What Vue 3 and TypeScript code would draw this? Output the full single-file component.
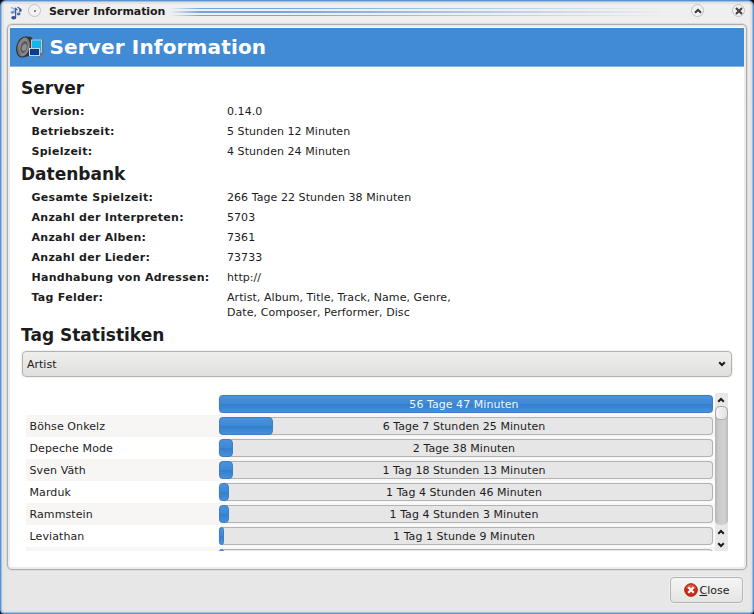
<script setup lang="ts">
interface Field { label: string; value: string }
interface Stat { name: string; time: string; width: number }

const server: Field[] = [
  { label: 'Version:', value: '0.14.0' },
  { label: 'Betriebszeit:', value: '5 Stunden 12 Minuten' },
  { label: 'Spielzeit:', value: '4 Stunden 24 Minuten' },
]
const database: Field[] = [
  { label: 'Gesamte Spielzeit:', value: '266 Tage 22 Stunden 38 Minuten' },
  { label: 'Anzahl der Interpreten:', value: '5703' },
  { label: 'Anzahl der Alben:', value: '7361' },
  { label: 'Anzahl der Lieder:', value: '73733' },
  { label: 'Handhabung von Adressen:', value: 'http://' },
  { label: 'Tag Felder:', value: 'Artist, Album, Title, Track, Name, Genre,\nDate, Composer, Performer, Disc' },
]
const stats: Stat[] = [
  { name: '', time: '56 Tage 47 Minuten', width: 494 },
  { name: 'Böhse Onkelz', time: '6 Tage 7 Stunden 25 Minuten', width: 54 },
  { name: 'Depeche Mode', time: '2 Tage 38 Minuten', width: 14 },
  { name: 'Sven Väth', time: '1 Tag 18 Stunden 13 Minuten', width: 14 },
  { name: 'Marduk', time: '1 Tag 4 Stunden 46 Minuten', width: 10 },
  { name: 'Rammstein', time: '1 Tag 4 Stunden 3 Minuten', width: 10 },
  { name: 'Leviathan', time: '1 Tag 1 Stunde 9 Minuten', width: 5 },
  { name: '', time: '', width: 5 },
]
</script>

<template>
  <div class="window">
    <header class="titlebar">
      <svg class="note" width="12" height="14" viewBox="0 0 12 14">
        <path d="M1 1.500l3.200 1.200v3" fill="none" stroke="#8fa9d6" stroke-width="1.300" />
        <ellipse cx="2.600" cy="6.300" rx="2" ry="1.400" fill="#6f8fc8" />
        <path d="M5.600 11.500V2.500L7.500 4M9.800 6V2M7.500 1l3.500 2.500v2" fill="none" stroke="#3f5f9f" stroke-width="1.300" />
        <ellipse cx="3.700" cy="11.700" rx="2.500" ry="1.800" fill="#34518f" />
        <ellipse cx="8.700" cy="8" rx="1.800" ry="1.400" fill="#4869aa" />
      </svg>
      <span class="round dot"><i></i></span>
      <span class="caption">Server Information</span>
      <span class="stripes"><i></i><i></i><i></i></span>
      <span class="round">
        <svg width="8" height="6" viewBox="0 0 8 6"><path d="M1 4.800L4 1.800L7 4.800" fill="none" stroke="#393734" stroke-width="2" /></svg>
      </span>
      <span class="round close-x">
        <svg width="8" height="8" viewBox="0 0 8 8"><path d="M1 1L7 7M7 1L1 7" fill="none" stroke="#464441" stroke-width="2.200" /></svg>
      </span>
    </header>

    <main class="panel">
      <div class="banner">
        <svg class="speaker" width="28" height="24" viewBox="0 0 28 24">
          <defs>
            <linearGradient id="cone" x1="0" y1="0" x2="1" y2="1">
              <stop offset="0" stop-color="#a4a4a4" /><stop offset=".5" stop-color="#6b6b6b" /><stop offset="1" stop-color="#9a9a9a" />
            </linearGradient>
          </defs>
          <path d="M10 1.500L15.500 2L17.500 7L17 20L9 22Z" fill="#373737" />
          <ellipse cx="7.600" cy="12" rx="6.600" ry="10.200" transform="rotate(16 7.600 12)" fill="url(#cone)" stroke="#343434" stroke-width="1.200" />
          <ellipse cx="8" cy="12" rx="4" ry="6.800" transform="rotate(16 8 12)" fill="#5a5a5a" stroke="#999" stroke-width=".8" />
          <ellipse cx="8.300" cy="12.500" rx="2.300" ry="3.600" transform="rotate(16 8.300 12.500)" fill="#8f8f8f" />
          <path d="M25 4.500h2.500v14l-4 4h-2z" fill="#68747c" />
          <rect x="15.500" y="5" width="10" height="12" fill="#13b5f0" stroke="#bac8d0" />
          <rect x="13.500" y="13.500" width="10" height="7" fill="#073e91" stroke="#c8d2dc" />
        </svg>
        <h1>Server Information</h1>
      </div>

      <h2>Server</h2>
      <dl>
        <div v-for="f in server" :key="f.label" class="field"><dt>{{ f.label }}</dt><dd>{{ f.value }}</dd></div>
      </dl>
      <h2 class="second">Datenbank</h2>
      <dl>
        <div v-for="f in database" :key="f.label" class="field"><dt>{{ f.label }}</dt><dd>{{ f.value }}</dd></div>
      </dl>
      <h2 class="third">Tag Statistiken</h2>

      <div class="combo">
        <span>Artist</span>
        <svg width="8" height="6" viewBox="0 0 8 6"><path d="M1.200 1.300L4 4L6.800 1.300" fill="none" stroke="#1a1a1a" stroke-width="2" /></svg>
      </div>

      <div class="list">
        <div class="rows">
          <div v-for="(s, i) in stats" :key="i" class="row">
            <span class="name">{{ s.name }}</span>
            <div class="bar">
              <div class="fill" :style="{ width: s.width + 'px' }"></div>
              <span class="time" :class="{ light: i === 0 }">{{ s.time }}</span>
            </div>
          </div>
        </div>
        <div class="scroll">
          <span class="arrow"><svg width="8" height="6" viewBox="0 0 8 6"><path d="M1.200 4.700L4 2L6.800 4.700" fill="none" stroke="#1a1a1a" stroke-width="2" /></svg></span>
          <div class="groove"><div class="thumb"></div></div>
          <span class="arrow"><svg width="8" height="6" viewBox="0 0 8 6"><path d="M1.200 4.700L4 2L6.800 4.700" fill="none" stroke="#1a1a1a" stroke-width="2" /></svg></span>
          <span class="arrow"><svg width="8" height="6" viewBox="0 0 8 6"><path d="M1.200 1.300L4 4L6.800 1.300" fill="none" stroke="#1a1a1a" stroke-width="2" /></svg></span>
        </div>
      </div>
    </main>

    <footer>
      <button class="close" type="button">
        <svg width="14" height="14" viewBox="0 0 14 14">
          <circle cx="7" cy="7" r="6.300" fill="#cf2a12" stroke="#a31b10" />
          <path d="M2 5a5.300 5.300 0 0 1 10 0q-5 3-10 0z" fill="#e9735c" opacity=".6" />
          <path d="M4.300 4.300L9.700 9.700M9.700 4.300L4.300 9.700" stroke="#fff" stroke-width="2.200" />
        </svg>
        <span><u>C</u>lose</span>
      </button>
    </footer>
  </div>
</template>

<style>
body { background: #101418; overflow: hidden; }
</style>

<style scoped>
* { box-sizing: border-box; }
.window {
  width: 754px; height: 614px; display: flex; flex-direction: column;
  border: 1px solid #5b93cf; border-radius: 6px 6px 4px 4px;
  box-shadow: inset 0 0 0 1px #9fc0e4, inset 0 0 0 3px #e2e2e2;
  background: linear-gradient(#f0f0f0, #ececec 60px, #e7e7e7 200px);
  font: 11px/15px "DejaVu Sans", sans-serif; color: #1c1c1c;
}
.titlebar { height: 22px; flex: none; display: flex; align-items: center; padding: 0 8px 3px 9px; }
.note { margin-top: 4px; }
.round {
  width: 13px; height: 13px; flex: none; display: flex; align-items: center; justify-content: center;
  border: 1px solid #c2c2c2; border-radius: 50%; background: #f2f2f2;
}
.dot { margin-left: 6px; }
.dot i { width: 2px; height: 2px; background: #666; border-radius: 1px; }
.close-x { margin-left: 28px; }
.caption { margin: 1px 0 0 8px; font-weight: bold; white-space: nowrap; letter-spacing: -.08px; }
.stripes {
  flex: 1; display: flex; flex-direction: column; gap: 2px; margin: 3px 7px 0 5px;
  mask-image: linear-gradient(90deg, transparent, #000 30px, #000 20%, transparent 98%);
}
.stripes i { height: 1.5px; background: #6fa6df; }
.panel {
  height: 546px; margin: 1px 6px 0; flex: none; display: flex; flex-direction: column;
  border: 1px solid #adadad; border-radius: 5px; background: #fff; padding: 3px 2px 0;
  box-shadow: inset 0 0 0 2px #ececec, 0 0 0 1px #dadada;
}
.banner {
  height: 39px; flex: none; display: flex; align-items: center; background: #418bd5;
  border-bottom: 1px solid #84b2e1; padding-left: 6px; color: #fff;
}
.speaker { margin-right: 5.5px; }
h1 { margin: 0; font-size: 20px; line-height: 24px; letter-spacing: .15px; }
h2 { margin: 10px 0 0 11px; font-size: 17px; line-height: 22px; }
h2.second, h2.third { margin-top: -1px; }
dl { margin: 5px 0 0 21px; }
.field { display: flex; padding-bottom: 5px; }
dt { width: 196px; padding-left: .5px; font-weight: bold; letter-spacing: .28px; }
dd { margin: 0; white-space: pre; letter-spacing: .06px; }
.combo {
  height: 26px; margin: 5px 12px 0 12px; flex: none; display: flex; align-items: center; justify-content: space-between;
  padding: 0 5px 0 4px; border: 1px solid #b2b2b0; border-radius: 4px; background: linear-gradient(#efefee, #dfdfde);
  box-shadow: 0 0 0 1px #f2f2f2;
}
.list { height: 158px; margin: 16px 16px 0; display: flex; overflow: hidden; }
.rows { flex: 1; }
.row { height: 22px; display: flex; align-items: center; }
.row:nth-child(even) { background: #f7f6f5; }
.name { width: 193px; padding-left: 3.500px; letter-spacing: .1px; }
.bar {
  width: 494px; height: 18px; display: grid; align-items: center; border-radius: 4px;
  background: #e6e6e6; box-shadow: inset 0 0 0 1px #b3b3b3, 0 0 0 1px #f6f6f6;
}
.fill, .time { grid-area: 1 / 1; }
.fill {
  height: 18px; border-radius: 4px; border: 1px solid #3d7fc6;
  background: linear-gradient(#4b92db, #3f88d3 48%, #347fcc 52%, #4690dc);
}
.time { padding-right: 4px; text-align: center; letter-spacing: .05px; }
.light { color: #f0f6fd; }
.scroll { width: 13px; margin-right: .5px; display: flex; flex-direction: column; background: #e8e8e8; }
.arrow { height: 13px; display: flex; align-items: center; justify-content: center; }
.groove { flex: 1; border-radius: 5px; background: linear-gradient(90deg, #b5b4b4, #cbcaca 25%, #d2d1d1 75%, #bab9b9); }
.thumb { height: 14px; border: 1px solid #aaa; border-radius: 5px; background: linear-gradient(90deg, #f5f5f5, #e2e2e2); }
footer { display: flex; justify-content: flex-end; padding: 7px 10px 0 0; }
.close {
  width: 73px; height: 26px; display: flex; align-items: center; justify-content: center; gap: 2px; padding: 0;
  border: 1px solid #b4b4b3; border-radius: 4px; background: linear-gradient(#f5f5f5, #e4e4e3);
  font: inherit; color: inherit; box-shadow: 0 0 0 1px #efefef;
}
</style>
